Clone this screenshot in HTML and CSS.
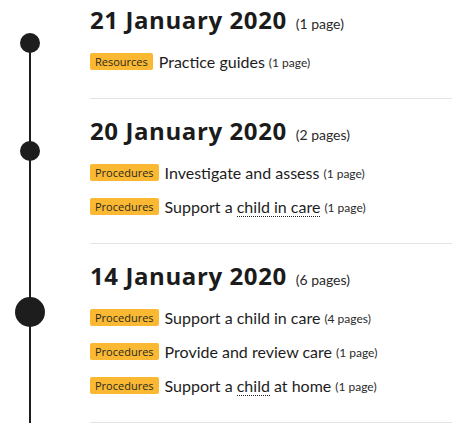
FILE: index.html
```html
<!DOCTYPE html>
<html lang="en">
<head>
<meta charset="utf-8">
<title>Timeline</title>
<link rel="stylesheet" href="styles.css">
</head>
<body>
<div class="timeline">
  <section class="entry entry--first">
    <div class="rail"><span class="dot dot--one"></span></div>
    <div class="body">
      <h2 class="date">21 January 2020 <span class="count">(1 page)</span></h2>
      <ul class="items">
        <li class="item"><span class="badge">Resources</span><span class="title">Practice guides</span><span class="small">(1 page)</span></li>
      </ul>
    </div>
  </section>
  <section class="entry">
    <div class="rail"><span class="dot dot--two"></span></div>
    <div class="body">
      <h2 class="date">20 January 2020 <span class="count">(2 pages)</span></h2>
      <ul class="items">
        <li class="item"><span class="badge">Procedures</span><span class="title">Investigate and assess</span><span class="small">(1 page)</span></li>
        <li class="item"><span class="badge">Procedures</span><span class="title">Support a <span class="term">child in care</span></span><span class="small">(1 page)</span></li>
      </ul>
    </div>
  </section>
  <section class="entry">
    <div class="rail"><span class="dot dot--big"></span></div>
    <div class="body">
      <h2 class="date">14 January 2020 <span class="count">(6 pages)</span></h2>
      <ul class="items">
        <li class="item"><span class="badge">Procedures</span><span class="title">Support a child in care</span><span class="small">(4 pages)</span></li>
        <li class="item"><span class="badge">Procedures</span><span class="title">Provide and review care</span><span class="small">(1 page)</span></li>
        <li class="item"><span class="badge">Procedures</span><span class="title">Support a <span class="term">child</span> at home</span><span class="small">(1 page)</span></li>
      </ul>
    </div>
  </section>
</div>
</body>
</html>
```
FILE: styles.css
```css
html, body {
  margin: 0;
  padding: 0;
  background: #ffffff;
}
body {
  font-family: Lato, "Open Sans", sans-serif;
  color: #1d1d1d;
  overflow: hidden;
}
.timeline {
  display: flex;
  flex-direction: column;
}
.entry {
  display: grid;
  grid-template-columns: 60px 1fr;
  column-gap: 30px;
}
.rail {
  background: linear-gradient(#1d1d1d, #1d1d1d) no-repeat center top / 2px 100%;
}
.entry--first .rail {
  background-position: center 42px;
}
.dot {
  display: block;
  width: 20px;
  height: 20px;
  border-radius: 50%;
  background: #1d1d1d;
  margin: 0 auto;
}
.dot--one { margin-top: 33px; }
.dot--two { margin-top: 42px; }
.dot--big { width: 30px; height: 30px; margin-top: 53px; }

.body {
  padding: 16px 0 25px;
  border-bottom: 1px solid #e4e4e4;
}
.entry--first .body {
  padding-top: 4px;
}
.date {
  margin: 0 0 13px;
  font-family: "Open Sans", sans-serif;
  font-weight: 700;
  font-size: 24px;
  line-height: 32px;
  height: 32px;
  letter-spacing: 0.6px;
  color: #1b1b1b;
}
.count {
  font-family: Lato, sans-serif;
  font-weight: 400;
  font-size: 14px;
  line-height: 1;
  letter-spacing: 0;
  color: #2a2a2a;
  margin-left: 2px;
}
.items {
  list-style: none;
  margin: 0;
  padding: 0;
  display: flex;
  flex-direction: column;
  gap: 10px;
}
.item {
  display: flex;
  align-items: center;
  height: 24px;
  font-size: 16px;
}
.badge {
  font-family: "Open Sans", sans-serif;
  font-size: 11px;
  line-height: 17px;
  height: 17px;
  padding: 0 5px;
  background: #fbb832;
  color: #1f2a1f;
  border-radius: 2px;
  margin-right: 6px;
}
.title {
  color: #1d1d1d;
}
.small {
  font-size: 12px;
  color: #2a2a2a;
  margin-left: 4px;
  padding-top: 2px;
}
.term {
  border-bottom: 1px dotted #222;
}
```
